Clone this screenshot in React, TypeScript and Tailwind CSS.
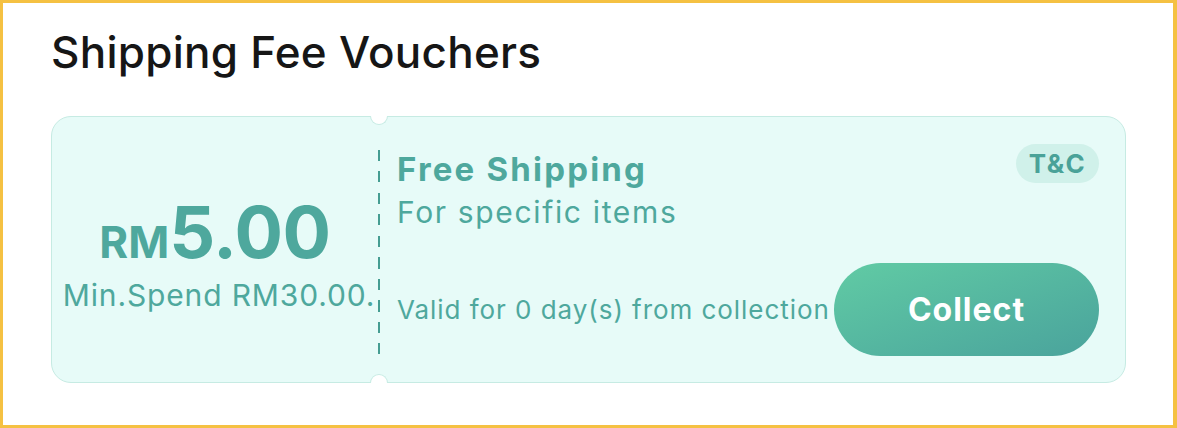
export default function App() {
  return (
    <div
      className="w-[1177px] h-[428px] border-[3px] border-r-4 border-[#f5c142] bg-white"
      style={{ fontFamily: 'Inter, "Liberation Sans", sans-serif' }}
    >
      <div className="pl-[48px] pr-[47px] pt-[27px]">
        <h1 className="text-[44px] leading-[44px] font-medium tracking-[0.25px] text-[#161616]">Shipping Fee Vouchers</h1>

        {/* voucher card */}
        <div className="mt-[42px] h-[267px] flex rounded-[20px] border border-[#c6ebe3] bg-[#e7fbf8] text-[#4ea89d]">
          {/* amount */}
          <div className="w-[326px] flex flex-col items-center justify-center pt-[7px]">
            <div className="flex items-baseline font-bold leading-none">
              <span className="text-[44px]">RM</span>
              <span className="text-[72px] tracking-[-0.5px]">5.00</span>
            </div>
            <div className="mt-[12px] pl-[8px] text-[30px] leading-none tracking-[0.85px]">Min.Spend RM30.00.</div>
          </div>

          {/* divider + notches */}
          <div className="relative w-[2px]">
            <div className="absolute left-1/2 -translate-x-1/2 top-[-1px] w-[18px] h-[9px] rounded-b-full border border-t-0 border-[#c6ebe3] bg-white" />
            <div className="mt-[33px] h-[205px] w-[2px] bg-[repeating-linear-gradient(to_bottom,#459d92_0_11px,transparent_11px_21.5px)]" />
            <div className="absolute left-1/2 -translate-x-1/2 bottom-[-1px] w-[18px] h-[9px] rounded-t-full border border-b-0 border-[#c6ebe3] bg-white" />
          </div>

          {/* details */}
          <div className="flex-1 flex flex-col justify-between pl-[17px] pr-[26px] pt-[27px] pb-[26px]">
            <div className="flex items-start justify-between">
              <div className="mt-[9px]">
                <div className="text-[33px] leading-none font-bold tracking-[2.2px]">Free Shipping</div>
                <div className="mt-[11px] text-[30px] leading-none tracking-[1.65px]">For specific items</div>
              </div>
              <span className="h-[39px] w-[83px] flex items-center justify-center rounded-full bg-[#d0f1ea] text-[26px] font-bold tracking-[1.5px] text-[#4aa298]">
                T&amp;C
              </span>
            </div>
            <div className="flex items-center justify-between">
              <span className="text-[26px] leading-none tracking-[0.95px]">Valid for 0 day(s) from collection</span>
              <button className="h-[93px] w-[265px] rounded-full bg-linear-to-br from-[#61cba4] to-[#4aa39c] text-[32px] font-bold tracking-[1px] text-white">
                Collect
              </button>
            </div>
          </div>
        </div>
      </div>
    </div>
  );
}
